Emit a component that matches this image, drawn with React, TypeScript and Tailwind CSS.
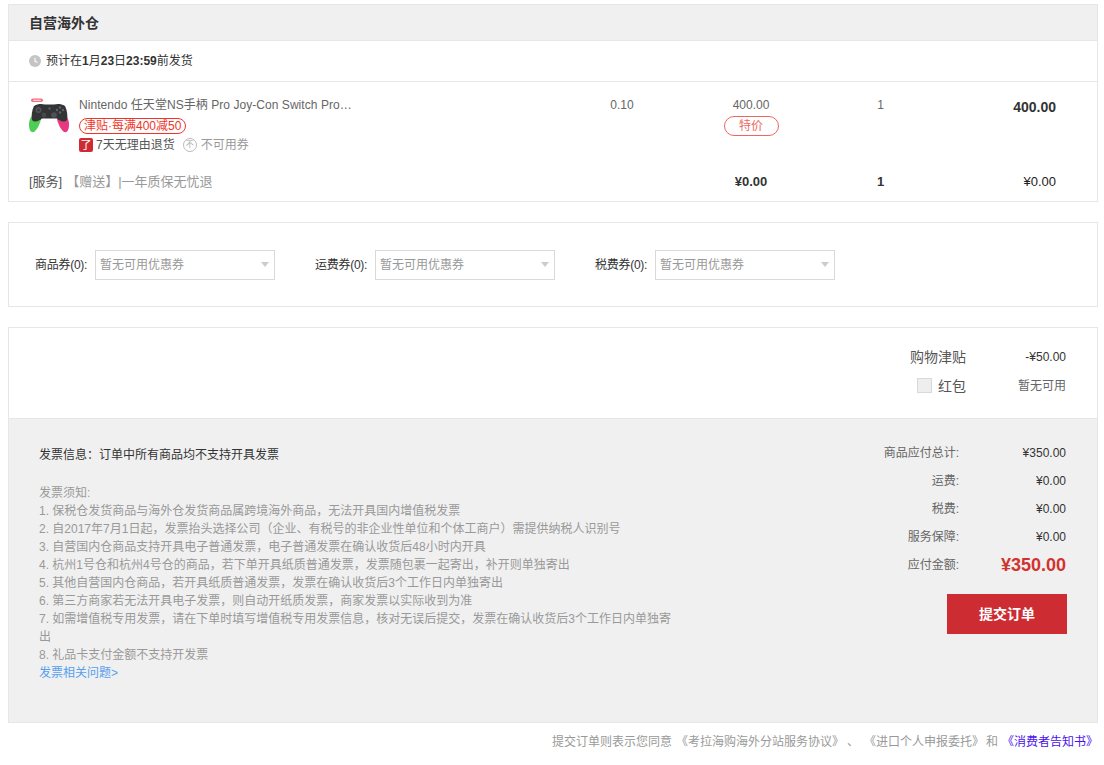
import React from "react";

function Controller() {
  return (
    <svg width="40" height="40" viewBox="0 0 40 40" className="shrink-0">
      <rect x="2" y="0.5" width="12" height="3.6" rx="1.8" fill="#f2707e" />
      <rect x="4" y="1.7" width="8" height="1.2" rx="0.6" fill="#fbd3d8" />
      <path d="M2 19 C4 18 8 19 12 21 C11 26 8 32 5 34 C1 35 0 31 0 26 C0 23 1 21 2 19 Z" fill="#4fce55" />
      <path d="M38 19 C36 18 32 19 28 21 C29 26 32 32 35 34 C39 35 40 31 40 26 C40 23 39 21 38 19 Z" fill="#e8387f" />
      <path d="M5 8 C9 5.5 13 6 16 6.5 L25 6.5 C28 6 32 5.5 36 8 C38 12 39 18 38 22 C35 25 31 23 28 20.5 L13 20.5 C10 23 6 25 3 22 C2 18 3 12 5 8 Z" fill="#333436" />
      <circle cx="9.5" cy="12" r="3" fill="#55565a" />
      <circle cx="9.5" cy="12" r="1.6" fill="#3c3d40" />
      <circle cx="25" cy="17" r="2.8" fill="#505155" />
      <circle cx="15" cy="17" r="2.4" fill="#47484c" />
      <circle cx="31" cy="9.5" r="1.2" fill="#626367" />
      <circle cx="28" cy="12" r="1.2" fill="#626367" />
      <circle cx="34" cy="12" r="1.2" fill="#626367" />
      <circle cx="31" cy="14.5" r="1.2" fill="#626367" />
      <circle cx="20.5" cy="10.5" r="1.2" fill="#5a5b5f" />
    </svg>
  );
}

function Clock() {
  return (
    <svg width="12" height="12" viewBox="0 0 12 12" className="shrink-0">
      <circle cx="6" cy="6" r="6" fill="#c4c4c4" />
      <path d="M6 2.8V6.2L8.4 7.6" fill="none" stroke="#fff" strokeWidth="1.1" />
    </svg>
  );
}

function Arrow() {
  return <span className="ml-auto w-0 h-0 border-x-[4.5px] border-x-transparent border-t-[5px] border-t-[#cccccc]" />;
}

function Coupon({ label, cls }: { label: string; cls: string }) {
  return (
    <div className={`flex items-center ${cls}`}>
      <span className="text-[#333] whitespace-nowrap w-[60px] text-right tracking-[-0.3px]">{label}</span>
      <div className="w-[180px] h-[30px] ml-[8px] border border-[#d9d9d9] flex items-center pl-[4px] pr-[5px] text-[#999]">
        暂无可用优惠券
        <Arrow />
      </div>
    </div>
  );
}

function Fee({ label, value }: { label: string; value: string }) {
  return (
    <div className="flex h-[28px] items-center justify-end">
      <span className="text-[#666]">{label}</span>
      <span className="w-[108px] pr-[1px] text-right text-[#333]">{value}</span>
    </div>
  );
}

const notes = [
  "发票须知:",
  "1. 保税仓发货商品与海外仓发货商品属跨境海外商品，无法开具国内增值税发票",
  "2. 自2017年7月1日起，发票抬头选择公司（企业、有税号的非企业性单位和个体工商户）需提供纳税人识别号",
  "3. 自营国内仓商品支持开具电子普通发票，电子普通发票在确认收货后48小时内开具",
  "4. 杭州1号仓和杭州4号仓的商品，若下单开具纸质普通发票，发票随包裹一起寄出，补开则单独寄出",
  "5. 其他自营国内仓商品，若开具纸质普通发票，发票在确认收货后3个工作日内单独寄出",
  "6. 第三方商家若无法开具电子发票，则自动开纸质发票，商家发票以实际收到为准",
  "7. 如需增值税专用发票，请在下单时填写增值税专用发票信息，核对无误后提交，发票在确认收货后3个工作日内单独寄出",
  "8. 礼品卡支付金额不支持开发票",
];

export default function App() {
  return (
    <div className="w-[1104px] h-[765px] overflow-hidden bg-white pl-2 pt-1 text-xs font-['Liberation_Sans','Noto_Sans_CJK_SC',sans-serif]">
      <div className="w-[1090px]">
        <section className="border border-[#e6e6e6] h-[198px]">
          <div className="h-[36px] bg-[#f0f0f0] border-b border-[#e6e6e6] pl-5 flex items-center text-sm font-bold text-[#333]">
            自营海外仓
          </div>
          <div className="h-[41px] border-b border-[#e6e6e6] pl-5 flex items-center gap-[5px] text-[#333]">
            <Clock />
            <span>
              预计在<b>1</b>月<b>23</b>日<b>23:59</b>前发货
            </span>
          </div>
          <div className="flex pl-5 pt-[16px] h-[82px] text-[#666]">
            <div className="w-[553px] flex gap-2.5">
              <Controller />
              <div>
                <div className="leading-[15px] whitespace-nowrap tracking-[0.05px]">Nintendo 任天堂NS手柄 Pro Joy-Con Switch Pro…</div>
                <div className="mt-[5px] h-[16px] w-fit px-[4px] border border-[#f0342a] rounded-full text-[#f0342a] leading-[14px]">津贴·每满400减50</div>
                <div className="mt-[3px] flex items-center h-[16px]">
                  <span className="w-[14px] h-[14px] rounded-[2px] bg-[#ce2c33] text-white text-[11px] leading-[14px] text-center">了</span>
                  <span className="ml-[3px] text-[#555]">7天无理由退货</span>
                  <span className="ml-[8px] w-[14px] h-[14px] rounded-full border border-[#bbb] text-[#aaa] text-[8px] leading-[12px] text-center">不</span>
                  <span className="ml-[4px] text-[#999]">不可用券</span>
                </div>
              </div>
            </div>
            <div className="w-[80px] text-center leading-[15px]">0.10</div>
            <div className="w-[29px]" />
            <div className="w-[120px] flex flex-col items-center">
              <span className="leading-[15px]">400.00</span>
              <span className="mt-[3px] w-[55px] h-[20px] rounded-full border border-[#ee6660] text-[#ee6660] text-center leading-[18px]">特价</span>
            </div>
            <div className="w-[139px] text-center leading-[15px]">1</div>
            <div className="flex-1 text-right pr-[41px] text-[14px] font-bold text-[#333] leading-[18px]">400.00</div>
          </div>
          <div className="flex pl-5 h-[36px] items-center text-[13px]">
            <div className="w-[553px] text-[#666]">
              <span className="text-[#555]">[服务]</span>
              <span className="ml-[4px] text-[#999]">【赠送】|一年质保无忧退</span>
            </div>
            <div className="w-[109px]" />
            <div className="w-[120px] text-center font-bold text-[#333]">¥0.00</div>
            <div className="w-[139px] text-center font-bold text-[#333]">1</div>
            <div className="flex-1 text-right pr-[41px] text-[#222]">¥0.00</div>
          </div>
        </section>

        <section className="mt-5 border border-[#e6e6e6] h-[85px] flex items-center pl-[18px]">
          <Coupon label="商品券(0):" cls="" />
          <Coupon label="运费券(0):" cls="ml-[32px]" />
          <Coupon label="税费券(0):" cls="ml-[32px]" />
        </section>

        <section className="mt-5 border border-[#e6e6e6] h-[396px]">
          <div className="h-[91px] border-b border-[#e6e6e6] pt-[15px] pr-[31px] flex flex-col items-end">
            <div className="flex h-[28px] items-center">
              <span className="text-sm text-[#555]">购物津贴</span>
              <span className="w-[100px] text-right text-[#333]">-¥50.00</span>
            </div>
            <div className="flex h-[30px] items-center">
              <span className="mb-[2px] w-[15px] h-[15px] bg-[#eee] border border-[#d9d9d9]" />
              <span className="ml-[6px] text-sm text-[#555]">红包</span>
              <span className="w-[100px] text-right text-[#666]">暂无可用</span>
            </div>
          </div>
          <div className="h-[303px] bg-[#f0f0f0] flex justify-between pl-[30px] pr-[30px] pt-[20px]">
            <div className="w-[636px] pt-[7px] leading-[18px] text-[#999]">
              <div className="text-[#333]">发票信息：订单中所有商品均不支持开具发票</div>
              <div className="mt-[20px]">
                {notes.map((n) => (
                  <div key={n}>{n}</div>
                ))}
              </div>
              <div className="text-[#55a0ee]">发票相关问题&gt;</div>
            </div>
            <div className="flex flex-col items-end">
              <Fee label="商品应付总计:" value="¥350.00" />
              <Fee label="运费:" value="¥0.00" />
              <Fee label="税费:" value="¥0.00" />
              <Fee label="服务保障:" value="¥0.00" />
              <div className="flex h-[28px] items-center justify-end">
                <span className="text-[#666]">应付金额:</span>
                <span className="w-[108px] pr-[1px] text-right text-[18px] font-bold text-[#d2332f]">¥350.00</span>
              </div>
              <button className="mt-[15px] w-[120px] h-[40px] bg-[#ce2c33] text-white text-sm font-bold">提交订单</button>
            </div>
          </div>
        </section>

        <div className="h-[38px] flex items-center justify-end text-[#999]">
          <span>提交订单则表示您同意</span>
          <span className="ml-[4px]">《考拉海购海外分站服务协议》</span>
          <span className="ml-[3px] mr-[5px]">、</span>
          <span>《进口个人申报委托》</span>
          <span className="ml-[2px] mr-[4px]">和</span>
          <span className="text-[#4a12e8]">《消费者告知书》</span>
        </div>
      </div>
    </div>
  );
}
